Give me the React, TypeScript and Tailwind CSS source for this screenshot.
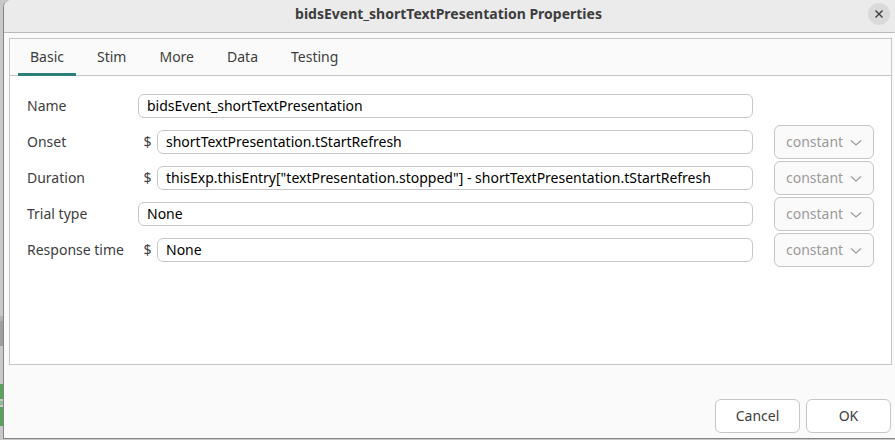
import { useState } from "react";

type Param = {
  id: string;
  label: string;
  value: string;
  code?: boolean;
  updates?: boolean;
};

const tabs = ["Basic", "Stim", "More", "Data", "Testing"];

const params: Param[] = [
  { id: "name", label: "Name", value: "bidsEvent_shortTextPresentation" },
  {
    id: "onset",
    label: "Onset",
    value: "shortTextPresentation.tStartRefresh",
    code: true,
    updates: true,
  },
  {
    id: "duration",
    label: "Duration",
    value:
      'thisExp.thisEntry["textPresentation.stopped"] - shortTextPresentation.tStartRefresh',
    code: true,
    updates: true,
  },
  { id: "trialType", label: "Trial type", value: "None", updates: true },
  {
    id: "responseTime",
    label: "Response time",
    value: "None",
    code: true,
    updates: true,
  },
];

function UpdateSelect({ label }: { label: string }) {
  return (
    <div className="relative">
      <select
        disabled
        aria-label={`${label} updates`}
        className="block h-[34px] w-full appearance-none rounded-md border border-[#c6c6c6] bg-[#fafafa] pl-[11px] text-[#9b9b9b] opacity-100"
      >
        <option>constant</option>
      </select>
      <svg
        viewBox="0 0 12 12"
        className="pointer-events-none absolute top-3 right-3 size-3"
        fill="none"
        stroke="#9b9b9b"
        strokeWidth="1.2"
      >
        <path d="M1 3.5 6 8 11 3.5" />
      </svg>
    </div>
  );
}

function ParamRow({ param }: { param: Param }) {
  return (
    <div className="grid h-9 grid-cols-[111px_1fr_100px] items-center">
      <label htmlFor={param.id}>{param.label}</label>
      <div className="mr-[21px] flex items-center">
        {param.code && <span className="w-[19px] text-center">$</span>}
        <input
          id={param.id}
          type="text"
          defaultValue={param.value}
          className="h-6 min-w-0 flex-1 rounded-md border border-[#c6c6c6] bg-white px-2 pb-0.5 text-black outline-none"
        />
      </div>
      {param.updates && <UpdateSelect label={param.label} />}
    </div>
  );
}

export default function App() {
  const [active, setActive] = useState("Basic");

  return (
    <div className="flex h-screen bg-[#c9c8c6] font-['Noto_Sans','Open_Sans',sans-serif] text-sm text-[#3d3d3d]">
      {/* Sliver of the main window behind the dialog */}
      <div className="flex w-[3px] shrink-0 flex-col">
        <div className="mt-[316px] h-[5px] bg-[#b3b2b1]" />
        <div className="h-[25px] bg-[#9f9e9d]" />
        <div className="mt-[38px] h-[15px] bg-[#57a559]" />
        <div className="my-[2px] h-1 bg-[#8fbd90]" />
        <div className="h-[19px] bg-[#57a559]" />
      </div>

      <div className="mb-px flex min-w-0 flex-1 flex-col overflow-hidden rounded-tl-lg border-b border-l border-[#858585] bg-[#fafafa]">
        <header className="grid h-[33px] shrink-0 grid-cols-[25px_1fr_27px] items-center border-b border-[#b9b9b9] bg-[#ebebeb] pb-1">
          <h1 className="col-start-2 text-center font-bold">
            bidsEvent_shortTextPresentation Properties
          </h1>
          <button
            type="button"
            aria-label="Close"
            className="flex size-[22px] items-center justify-center rounded-full bg-[#dadada]"
          >
            <svg
              viewBox="0 0 8 8"
              className="size-2"
              fill="none"
              stroke="#3d3d3d"
              strokeWidth="1.4"
            >
              <path d="M0.5 0.5 7.5 7.5M7.5 0.5 0.5 7.5" />
            </svg>
          </button>
        </header>

        <main className="mt-[5px] mr-[3px] ml-[5px] flex-1 border border-[#c6c6c6] bg-white">
          <div
            role="tablist"
            className="flex h-[37px] gap-[9px] border-b border-[#c6c6c6] bg-[#fafafa] pl-2"
          >
            {tabs.map((tab) => (
              <button
                key={tab}
                type="button"
                role="tab"
                aria-selected={active === tab}
                onClick={() => setActive(tab)}
                className={`-mb-px border-b-3 px-3 pt-0.5 ${
                  active === tab ? "border-[#2a7f7c]" : "border-transparent"
                }`}
              >
                {tab}
              </button>
            ))}
          </div>

          <form className="px-[17px] pt-3">
            {params.map((param) => (
              <ParamRow key={param.id} param={param} />
            ))}
          </form>
        </main>

        <footer className="mt-[34px] mr-1 mb-[5px] flex justify-end gap-[6px]">
          {["Cancel", "OK"].map((action) => (
            <button
              key={action}
              type="button"
              className="h-[34px] w-[85px] rounded-md border border-[#c6c6c6] bg-white"
            >
              {action}
            </button>
          ))}
        </footer>
      </div>
    </div>
  );
}
